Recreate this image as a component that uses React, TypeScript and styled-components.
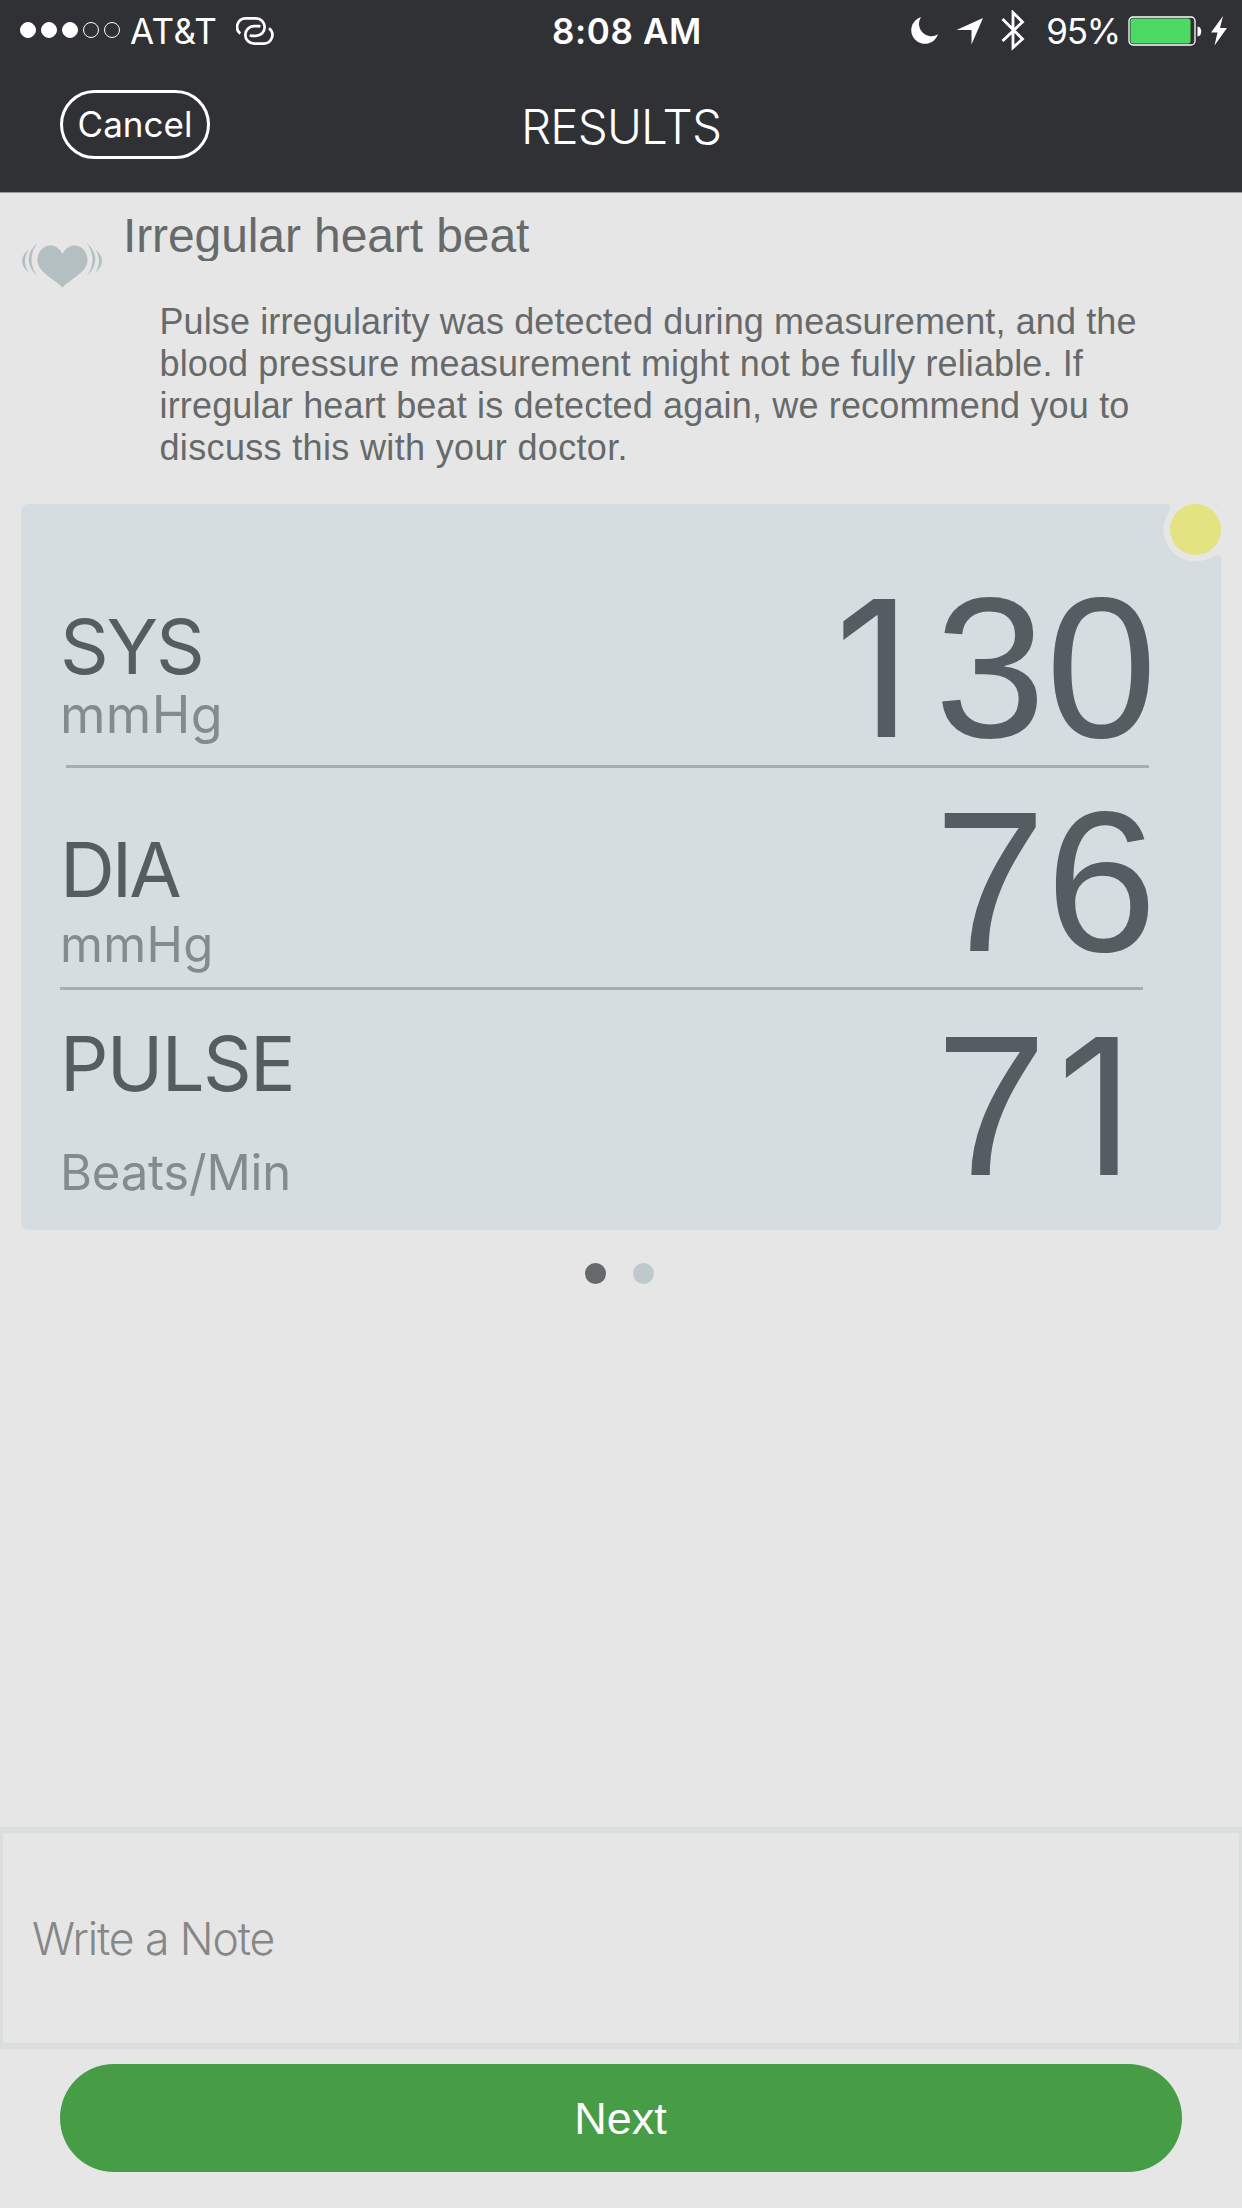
import React from "react";
import styled, { createGlobalStyle } from "styled-components";

const GlobalStyle = createGlobalStyle`
  * { box-sizing: border-box; }
  body { margin: 0; background: #e6e6e6; }
`;

const sans = `"Liberation Sans", Arial, sans-serif`;
const system = `Inter, "Liberation Sans", sans-serif`;

const Screen = styled.div`
  width: 1242px;
  height: 2208px;
  display: flex;
  flex-direction: column;
  background: #e6e6e6;
  font-family: ${sans};
  overflow: hidden;
`;

const Header = styled.header`
  height: 193px;
  background: #303135;
  border-bottom: 1px solid #a09c9c;
  color: #fff;
`;

const StatusBar = styled.div`
  height: 62px;
  display: grid;
  grid-template-columns: 1fr auto 1fr;
  padding: 0 14px 0 20px;
  font: 400 35px/62px ${system};
`;

const StatusGroup = styled.div<{ $end?: boolean }>`
  display: flex;
  align-items: center;
  justify-content: ${(p) => (p.$end ? "flex-end" : "flex-start")};
  svg { flex: none; display: block; }
`;

const Signal = styled.div`
  display: flex;
  gap: 5px;
  margin: -2px 10px 0 0;
`;

const SignalDot = styled.i<{ $on: boolean }>`
  width: 16px;
  height: 16px;
  border-radius: 50%;
  border: 1px solid #fff;
  background: ${(p) => (p.$on ? "#fff" : "transparent")};
`;

const Carrier = styled.span`
  margin-right: 19px;
  letter-spacing: 0.4px;
`;

const Clock = styled.span`
  padding-left: 6px;
  font-weight: 600;
  letter-spacing: 0.6px;
`;

const BatteryLevel = styled.span`
  margin: 0 8px 0 20px;
  letter-spacing: -1.2px;
`;

const NavBar = styled.div`
  height: 130px;
  display: grid;
  grid-template-columns: 1fr auto 1fr;
  padding: 28px 60px 0;
  align-items: start;
`;

const CancelButton = styled.button`
  width: 150px;
  height: 69px;
  padding: 0;
  border: 3px solid #fff;
  border-radius: 35px;
  background: none;
  color: #fff;
  font: 400 35px/63px ${system};
`;

const Title = styled.h1`
  margin: 7px 0 0;
  font: 300 47.5px/60px ${system};
  letter-spacing: -0.8px;
`;

const Notice = styled.section`
  height: 311px;
  display: grid;
  grid-template-columns: 102px 1fr;
  padding: 14px 60px 0 21px;
`;

const HeartIcon = styled.svg`
  display: block;
  margin-top: 34px;
`;

const NoticeBody = styled.div`
  color: #666a6a;
`;

const NoticeTitle = styled.h2`
  margin: 0;
  height: 54px;
  overflow: hidden;
  font: 400 48px/58px ${sans};
  letter-spacing: -0.1px;
`;

const NoticeText = styled.p`
  margin: 40.4px 0 0 36.5px;
  font: 400 36px/41.75px ${sans};
`;

const NoticeLine = styled.span<{ $tracking: number }>`
  display: block;
  white-space: nowrap;
  letter-spacing: ${(p) => p.$tracking}px;
`;

const Card = styled.section`
  position: relative;
  height: 726px;
  margin: 0 21px;
  border-radius: 8px;
  background: #d5dde0;
`;

const LevelBadge = styled.svg`
  position: absolute;
  top: -8px;
  right: -8px;
`;

const Reading = styled.div<{ $height: number }>`
  height: ${(p) => p.$height}px;
  display: flex;
  justify-content: space-between;
  padding: 0 64px 0 39px;
`;

const ReadingLabel = styled.div<{ $top: number; $gap: number }>`
  display: flex;
  flex-direction: column;
  gap: ${(p) => p.$gap}px;
  padding-top: ${(p) => p.$top}px;
  font-family: ${system};
`;

const ReadingName = styled.span<{ $tracking: number }>`
  font-size: 76px;
  line-height: 76px;
  letter-spacing: ${(p) => p.$tracking}px;
  color: #565d62;
`;

const ReadingUnit = styled.span<{ $size: number; $tracking: number }>`
  font-size: ${(p) => p.$size}px;
  line-height: 60px;
  letter-spacing: ${(p) => p.$tracking}px;
  color: #828c8d;
`;

const ReadingValue = styled.div<{ $top: number }>`
  padding-top: ${(p) => p.$top}px;
  font: 400 200px/198px ${sans};
  color: #565d62;
`;

const One = styled.span`
  display: inline-block;
  width: 110px;
  padding-left: 10px;
  font-family: ${system};
  font-size: 190px;
  line-height: 190px;
`;

const Rule = styled.hr<{ $inset: number }>`
  width: 1083px;
  height: 3px;
  margin: 0 0 0 ${(p) => p.$inset}px;
  border: 0;
  background: #a3afb1;
`;

const Pager = styled.nav`
  display: flex;
  gap: 27px;
  padding: 33px 0 0 585px;
`;

const PageDot = styled.i<{ $active?: boolean }>`
  width: 21px;
  height: 21px;
  border-radius: 50%;
  background: ${(p) => (p.$active ? "#656969" : "#bdc9cc")};
`;

const NoteField = styled.div`
  height: 222px;
  margin-top: auto;
  padding: 76px 0 0 29px;
  border: solid #dadede;
  border-width: 6px 3px;
  font: 300 44.5px/60px ${system};
  letter-spacing: -1.1px;
  color: #868787;
`;

const NextButton = styled.button`
  flex: none;
  height: 108px;
  margin: 15px 60px 36px;
  padding: 1px 1px 0 0;
  border: 0;
  border-radius: 54px;
  background: #479c46;
  color: #fff;
  font: 400 45px/108px ${sans};
`;

const noticeLines = [
  { text: "Pulse irregularity was detected during measurement, and the", tracking: 0.11 },
  { text: "blood pressure measurement might not be fully reliable. If", tracking: 0.12 },
  { text: "irregular heart beat is detected again, we recommend you to", tracking: 0.16 },
  { text: "discuss this with your doctor.", tracking: 0.34 },
];

const readings = [
  {
    name: "SYS", unit: "mmHg", value: "130", height: 261, top: 104, gap: 1,
    unitSize: 52, nameTracking: -2.2, unitTracking: 0.3, valueTop: 65, rule: 45,
  },
  {
    name: "DIA", unit: "mmHg", value: "76", height: 219, top: 63, gap: 8,
    unitSize: 49, nameTracking: -3, unitTracking: 0.3, valueTop: 15, rule: 39,
  },
  {
    name: "PULSE", unit: "Beats/Min", value: "71", height: 240, top: 35, gap: 42,
    unitSize: 49, nameTracking: -1.7, unitTracking: -0.2, valueTop: 17, rule: null,
  },
];

function Digits({ value }: { value: string }) {
  return <>{value.split("").map((d, i) => (d === "1" ? <One key={i}>1</One> : d))}</>;
}

export default function App() {
  return (
    <Screen>
      <GlobalStyle />
      <Header>
        <StatusBar>
          <StatusGroup>
            <Signal>
              {[true, true, true, false, false].map((on, i) => (
                <SignalDot key={i} $on={on} />
              ))}
            </Signal>
            <Carrier>AT&amp;T</Carrier>
            <svg width="38" height="28" viewBox="0 0 38 28" fill="none" stroke="#fff" strokeWidth="2.7">
              <path d="M4.2 16.6A8.6 8.6 0 0 1 9.5 1.4H20a8.7 8.7 0 0 1 0 17.4h-4.6a3.6 3.6 0 0 1-1.6-.6" />
              <path d="M33 11.2a8.6 8.6 0 0 1-5 15.4H18A8.7 8.7 0 0 1 18 9.2h4.7a3.6 3.6 0 0 1 1.5.6" />
            </svg>
          </StatusGroup>
          <Clock>8:08 AM</Clock>
          <StatusGroup $end>
            <svg width="115" height="42" viewBox="0 0 115 42" fill="#fff">
              <path d="M10 7A12.400 12.400 0 0 0 27 24.300A13.700 13.700 0 1 1 10 7z" />
              <path d="M72 8L60.500 34.500V20H45.500z" />
              <path d="M91.500 9l20 20-9.500 8.500V2.500L111.500 12l-20 19" fill="none" stroke="#fff" strokeWidth="2.800" />
            </svg>
            <BatteryLevel>95%</BatteryLevel>
            <svg width="100" height="30" viewBox="0 0 100 30">
              <rect x="1" y="1" width="66" height="28" rx="4" fill="none" stroke="#fff" strokeWidth="1.300" />
              <rect x="2.500" y="2.500" width="60" height="25" rx="2.500" fill="#4cd964" />
              <path d="M69.500 10.500c5 0 5 10 0 10z" fill="#fff" />
              <path d="M95 0L83 16.500h6.500L86.500 29.500 99 12h-7z" fill="#fff" />
            </svg>
          </StatusGroup>
        </StatusBar>
        <NavBar>
          <CancelButton>Cancel</CancelButton>
          <Title>RESULTS</Title>
        </NavBar>
      </Header>

      <Notice>
        <HeartIcon width="82" height="48" viewBox="0 0 82 48" fill="#b4bfc1">
          <path d="M41.500 13C38.500 7 34 4.500 29.500 4.500 22 4.500 16.500 11 16.500 19 16.500 31 32 37 41.500 46.500 51 37 66.500 31 66.500 19 66.500 11 61 4.500 53.500 4.500 49 4.500 44.500 7 41.500 13z" />
          <path d="M8 8Q-6 20 8 32Q0 20 8 8zM16 2Q-0.600 18.500 16 35Q5 18.500 16 2z" />
          <path d="M74 8Q88 20 74 32Q82 20 74 8zM66 2Q82.600 18.500 66 35Q77 18.500 66 2z" />
        </HeartIcon>
        <NoticeBody>
          <NoticeTitle>Irregular heart beat</NoticeTitle>
          <NoticeText>
            {noticeLines.map((line) => (
              <NoticeLine key={line.text} $tracking={line.tracking}>
                {line.text}
              </NoticeLine>
            ))}
          </NoticeText>
        </NoticeBody>
      </Notice>

      <Card>
        <LevelBadge width="72" height="72" viewBox="0 0 72 72" fill="#e6e6e6">
          <path d="M10 7V8Q14.500 8.500 12.500 14L20 8V7z" />
          <path d="M65 62H64Q63.500 57.500 58 59.500L64 52H65z" />
          <circle cx="38.500" cy="33.500" r="32" />
          <circle cx="38.500" cy="33.500" r="25.500" fill="#e3e381" />
        </LevelBadge>
        {readings.map((r) => (
          <React.Fragment key={r.name}>
            <Reading $height={r.height}>
              <ReadingLabel $top={r.top} $gap={r.gap}>
                <ReadingName $tracking={r.nameTracking}>{r.name}</ReadingName>
                <ReadingUnit $size={r.unitSize} $tracking={r.unitTracking}>
                  {r.unit}
                </ReadingUnit>
              </ReadingLabel>
              <ReadingValue $top={r.valueTop}>
                <Digits value={r.value} />
              </ReadingValue>
            </Reading>
            {r.rule !== null && <Rule $inset={r.rule} />}
          </React.Fragment>
        ))}
      </Card>

      <Pager>
        <PageDot $active />
        <PageDot />
      </Pager>

      <NoteField>Write a Note</NoteField>
      <NextButton>Next</NextButton>
    </Screen>
  );
}
